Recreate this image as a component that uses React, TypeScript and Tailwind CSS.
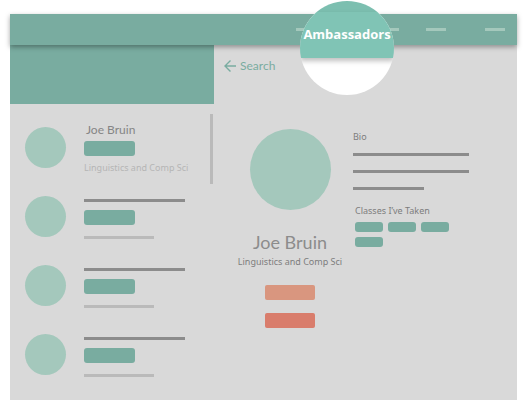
const people = [
  { id: 1, name: "Joe Bruin", major: "Linguistics and Comp Sci" },
  { id: 2 },
  { id: 3 },
  { id: 4 },
];

function PersonRow({ name, major }: { name?: string; major?: string }) {
  return (
    <li className="flex h-[69px] items-start gap-[18px]">
      <div className="mt-1.5 size-[41px] shrink-0 rounded-full bg-[#a4c8bc]" />
      <div className="flex min-w-0 flex-1 flex-col gap-1">
        {name ? (
          <h2 className="h-4 pl-0.5 font-[Lato,sans-serif] text-[12px] leading-[18px] text-[#858585]">{name}</h2>
        ) : (
          <div className="flex h-4 items-center pt-1">
            <div className="h-[3px] w-[101px] bg-[#8c8c8c]" />
          </div>
        )}
        <button type="button" aria-label="View profile" className="h-[15px] w-[51px] rounded-[3px] bg-[#79aca0]" />
        {major ? (
          <p className="h-4 text-[9px] leading-4 whitespace-nowrap text-[#b5b5b5]">{major}</p>
        ) : (
          <div className="flex h-4 items-center">
            <div className="h-[3px] w-[70px] bg-[#bababa]" />
          </div>
        )}
      </div>
    </li>
  );
}

function NavDash({ label }: { label: string }) {
  return <a href="#" aria-label={label} className="h-[3px] w-5 shrink-0 bg-[#a4c8bc]" />;
}

function Header() {
  return (
    <header className="relative z-10 h-[31px] bg-[#79aca0] shadow-[0_2px_5px_rgba(0,0,0,0.35)]">
      <nav className="flex h-full items-center justify-end pr-3">
        <NavDash label="Home" />
        <div className="relative h-full w-[63px]">
          <a
            href="#"
            className="absolute -top-[13px] -left-4 flex size-[94px] flex-col overflow-hidden rounded-full bg-white"
          >
            <span className="h-[11px] shrink-0 bg-[#7cbfb0]" />
            <span className="flex h-[46px] shrink-0 items-center justify-center bg-[#80c4b5] pb-0.5 font-['Open_Sans',sans-serif] text-[13px] leading-4 font-bold text-white shadow-[0_3px_5px_rgba(0,0,0,0.25)]">
              Ambassadors
            </span>
          </a>
        </div>
        <NavDash label="Events" />
        <div className="w-[27px]" />
        <NavDash label="Messages" />
        <div className="w-[39px]" />
        <NavDash label="Account" />
      </nav>
    </header>
  );
}

function Profile() {
  return (
    <main className="min-w-0 flex-1 pt-3">
      <a
        href="#"
        className="ml-[10px] flex h-[18px] w-fit items-center gap-1 font-[Lato,sans-serif] text-[12px] leading-4 text-[#79aca0]"
      >
        <svg width="12" height="12" viewBox="0 0 12 12" fill="none" stroke="currentColor" strokeWidth="1.4" aria-hidden="true">
          <path d="M12 6H1M6.5 0.5L1 6l5.5 5.5" />
        </svg>
        Search
      </a>
      <div className="mt-[54px] flex items-start gap-[11px] pl-6">
        <section className="flex w-[104px] shrink-0 flex-col items-center">
          <div className="size-[81px] rounded-full bg-[#a4c8bc]" />
          <h1 className="mt-5 font-[Lato,sans-serif] text-[18px] leading-6 whitespace-nowrap text-[#8c8c8c]">Joe Bruin</h1>
          <p className="text-[9px] leading-4 whitespace-nowrap text-[#7d7d7d]">Linguistics and Comp Sci</p>
          <button type="button" aria-label="Message" className="mt-[15px] h-[15px] w-[50px] rounded-[2px] bg-[#d9967f]" />
          <button type="button" aria-label="Request" className="mt-[13px] h-[15px] w-[50px] rounded-[2px] bg-[#d97d6c]" />
        </section>
        <section className="min-w-0 flex-1">
          <h2 className="text-[9px] leading-4 text-[#7d7d7d]">Bio</h2>
          <div className="mt-2 flex flex-col gap-[14px]">
            <div className="h-[3px] w-[116px] bg-[#8c8c8c]" />
            <div className="h-[3px] w-[116px] bg-[#8c8c8c]" />
            <div className="h-[3px] w-[71px] bg-[#8c8c8c]" />
          </div>
          <h2 className="mt-[13px] pl-0.5 text-[9px] leading-4 text-[#7d7d7d]">Classes I’ve Taken</h2>
          <ul className="mt-[3px] flex max-w-[100px] flex-wrap gap-x-[5px] gap-y-[5px] pl-0.5">
            <li className="h-[10px] w-7 rounded-[3px] bg-[#79aca0]" />
            <li className="h-[10px] w-7 rounded-[3px] bg-[#79aca0]" />
            <li className="h-[10px] w-7 rounded-[3px] bg-[#79aca0]" />
            <li className="h-[10px] w-7 rounded-[3px] bg-[#79aca0]" />
          </ul>
        </section>
      </div>
    </main>
  );
}

export default function App() {
  return (
    <div className="flex min-h-screen flex-col bg-white px-[10px] pt-[14px] font-['Noto_Sans',sans-serif]">
      <Header />
      <div className="flex flex-1 bg-[#d9d9d9]">
        <aside className="w-[204px] shrink-0">
          <div className="h-[59px] bg-[#79aca0]" />
          <div className="flex items-start">
            <ul className="min-w-0 flex-1 pt-[17px] pl-[15px]">
              {people.map((person) => (
                <PersonRow key={person.id} name={person.name} major={person.major} />
              ))}
            </ul>
            <div className="mt-[10px] mr-px h-[70px] w-[3px] bg-[#bababa]" />
          </div>
        </aside>
        <Profile />
      </div>
    </div>
  );
}
